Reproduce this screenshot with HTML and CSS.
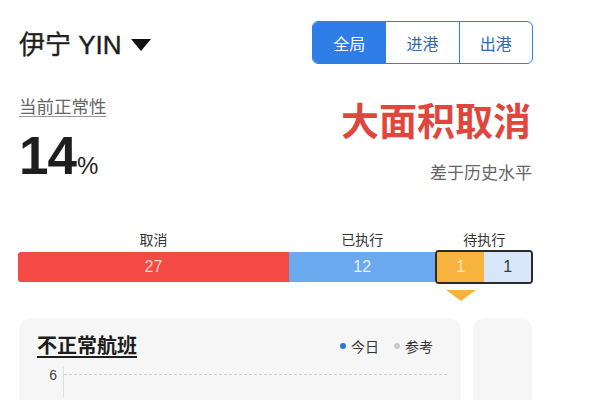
FILE: index.html
```html
<!DOCTYPE html>
<html lang="zh">
<head>
<meta charset="utf-8">
<link rel="stylesheet" href="styles.css">
</head>
<body>
<div class="page">
  <div class="header">
    <div class="title">伊宁 YIN <span class="caret"></span></div>
    <div class="seg">
      <div class="seg-item active">全局</div>
      <div class="seg-item">进港</div>
      <div class="seg-item">出港</div>
    </div>
  </div>

  <div class="stats">
    <div class="left">
      <div class="label">当前正常性</div>
      <div class="pct"><span class="num">14</span><span class="unit">%</span></div>
    </div>
    <div class="right">
      <div class="status">大面积取消</div>
      <div class="sub">差于历史水平</div>
    </div>
  </div>

  <div class="bars">
    <div class="col col-cancel">
      <div class="bar-label">取消</div>
      <div class="seg-bar red">27</div>
    </div>
    <div class="col col-done">
      <div class="bar-label">已执行</div>
      <div class="seg-bar blue">12</div>
    </div>
    <div class="col col-wait">
      <div class="bar-label">待执行</div>
      <div class="wait-box">
        <div class="seg-bar orange">1</div>
        <div class="seg-bar pale">1</div>
      </div>
      <div class="pointer"></div>
    </div>
  </div>

  <div class="cards">
    <div class="card main-card">
      <div class="card-head">
        <div class="card-title">不正常航班</div>
        <div class="legend">
          <span class="dot dot-blue"></span><span class="lg">今日</span>
          <span class="dot dot-gray"></span><span class="lg">参考</span>
        </div>
      </div>
      <div class="chart">
        <div class="ytick">6</div>
        <div class="plot"><div class="gridline"></div></div>
      </div>
    </div>
    <div class="card side-card"></div>
  </div>
</div>
</body>
</html>
```

FILE: styles.css
```css
* { box-sizing: border-box; }
html, body { margin: 0; padding: 0; background: #fff; }
body {
  font-family: "Liberation Sans", "Noto Sans CJK SC", sans-serif;
  color: #222;
  width: 600px;
  height: 400px;
  overflow: hidden;
}
.page {
  padding: 21px 67px 0 19px;
}
.header {
  display: flex;
  justify-content: space-between;
  align-items: center;
  height: 43px;
}
.title {
  font-size: 26px;
  line-height: 30px;
  color: #1e1e1e;
  display: flex;
  align-items: center;
  margin-top: 4px;
  -webkit-text-stroke: 0.4px #1e1e1e;
}
.caret {
  display: inline-block;
  width: 0;
  height: 0;
  border-left: 10px solid transparent;
  border-right: 10px solid transparent;
  border-top: 12px solid #111;
  margin-left: 9px;
}
.seg {
  display: flex;
  width: 221px;
  height: 43px;
  border: 1.5px solid #2f7de1;
  border-radius: 6px;
  overflow: hidden;
}
.seg-item {
  flex: 1;
  display: flex;
  align-items: center;
  justify-content: center;
  font-size: 16px;
  color: #2f6cb4;
  border-left: 1.5px solid #2f7de1;
}
.seg-item:first-child { border-left: none; }
.seg-item.active { background: #2f7de6; color: #fff; }

.stats {
  display: flex;
  justify-content: space-between;
  margin-top: 33px;
}
.label {
  font-size: 17.5px;
  line-height: 20px;
  color: #666;
  text-decoration: underline;
  text-decoration-color: #999;
  text-underline-offset: 3px;
}
.pct {
  margin-top: 14px;
  line-height: 50px;
  color: #1e1e1e;
}
.num {
  font-size: 53px;
  font-weight: bold;
  letter-spacing: -1px;
}
.unit {
  font-size: 24px;
  margin-left: 1px;
}
.right {
  text-align: right;
  margin-top: 3px;
}
.status {
  font-size: 38px;
  line-height: 44px;
  font-weight: bold;
  color: #e0463b;
  margin-right: 2px;
}
.sub {
  font-size: 17px;
  line-height: 22px;
  color: #666;
  margin-top: 19px;
  margin-right: 1px;
}

.bars {
  display: flex;
  margin-top: 37px;
  margin-left: -1px;
}
.col { display: flex; flex-direction: column; align-items: stretch; }
.bar-label {
  font-size: 14px;
  line-height: 18px;
  color: #333;
  text-align: center;
  height: 19px;
}
.col-cancel { width: 272px; }
.col-done { width: 147px; }
.col-wait { width: 98px; }
.seg-bar {
  height: 30px;
  display: flex;
  align-items: center;
  justify-content: center;
  font-size: 16px;
}
.col-cancel .seg-bar, .col-done .seg-bar { margin-top: 2px; }
.red { background: #f44a45; color: #fbd5d2; border-radius: 3px 0 0 3px; }
.blue { background: #6caaf0; color: #e6f1fd; }
.wait-box {
  display: flex;
  border: 2px solid #2a2a2a;
  border-radius: 4px;
  overflow: hidden;
  height: 34px;
}
.wait-box .seg-bar { flex: 1; height: 30px; }
.orange { background: #f6b43f; color: #fde7bd; }
.pale { background: #d7e6f8; color: #3a3a3a; }
.pointer {
  width: 0;
  height: 0;
  border-left: 15px solid transparent;
  border-right: 15px solid transparent;
  border-top: 11px solid #f6b43f;
  margin: 6px 0 0 11px;
}

.cards {
  display: flex;
  gap: 12px;
  margin-top: 17px;
}
.card {
  background: #f6f6f6;
  border-radius: 12px;
  height: 82px;
}
.main-card {
  width: 442px;
  padding: 16px 14px 0 18px;
}
.side-card { width: 59px; }
.card-head {
  display: flex;
  justify-content: space-between;
  align-items: center;
}
.card-title {
  font-size: 20px;
  line-height: 24px;
  font-weight: bold;
  color: #1e1e1e;
  text-decoration: underline;
  text-decoration-thickness: 2px;
  text-underline-offset: 3px;
}
.legend {
  display: flex;
  align-items: center;
  font-size: 14px;
  color: #333;
  margin-right: 14px;
}
.dot {
  width: 6px;
  height: 6px;
  border-radius: 50%;
  display: inline-block;
  margin-right: 5px;
}
.dot-blue { background: #2f78d6; }
.dot-gray { background: #c8c8c8; margin-left: 15px; }
.chart {
  display: flex;
  margin-top: 9px;
}
.ytick {
  width: 26px;
  font-size: 14px;
  line-height: 16px;
  color: #444;
  text-align: right;
  padding-right: 6px;
}
.plot {
  flex: 1;
  border-left: 1px solid #ddd;
  height: 30px;
  padding-top: 7px;
}
.gridline {
  border-top: 1px dashed #d0d0d0;
}
.cards .card {
  border-bottom-left-radius: 0;
  border-bottom-right-radius: 0;
}
```
